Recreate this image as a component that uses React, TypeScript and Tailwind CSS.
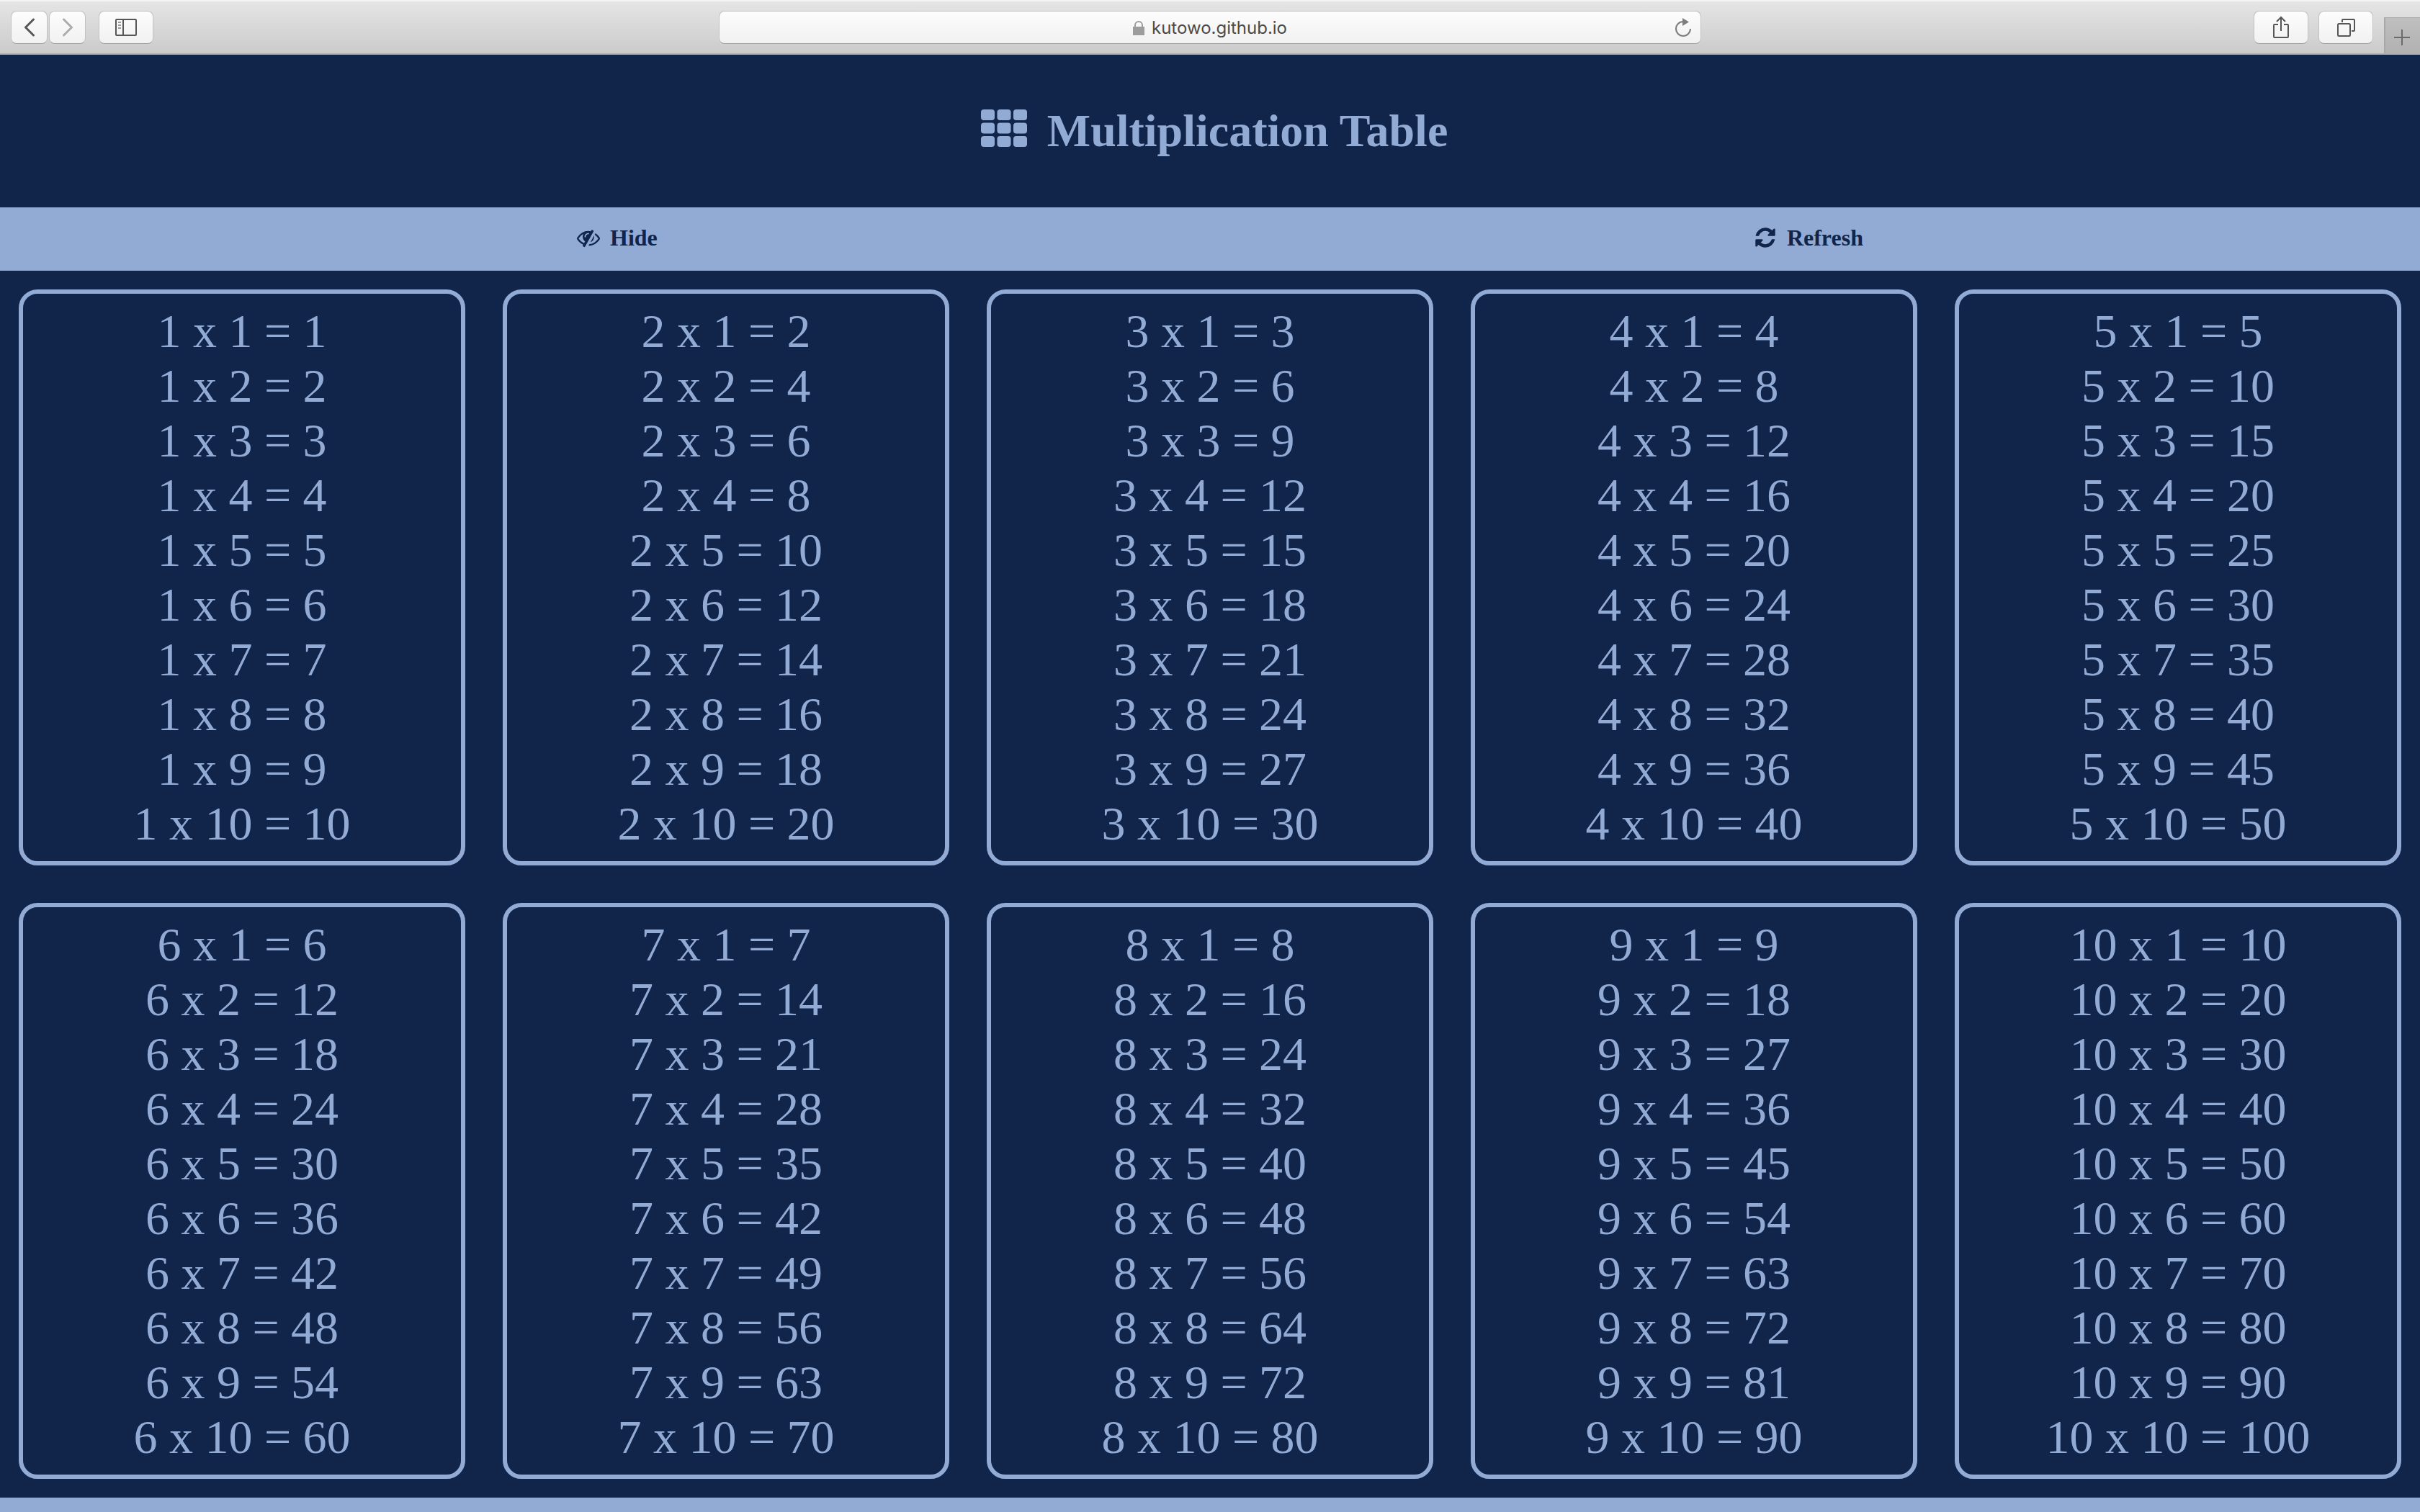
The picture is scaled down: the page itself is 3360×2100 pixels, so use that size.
const numbers = [1, 2, 3, 4, 5, 6, 7, 8, 9, 10];

const toolbarButton =
  "flex h-[46px] items-center justify-center rounded-lg border border-[#c2c2c2] border-b-[#a0a0a0] bg-linear-to-b from-[#fdfdfd] to-[#f1f1f1]";

function BrowserBar() {
  return (
    <div className="grid h-[76px] grid-cols-[1fr_minmax(0,1364px)_1fr] border-t-2 border-b-2 border-t-[#f4f4f4] border-b-[#b1b1b1] bg-linear-to-b from-[#e5e5e5] to-[#cbcbcb] font-['Inter',sans-serif]">
      <div className="flex items-start pt-[13px] pl-[15px]">
        <button type="button" aria-label="Back" className={`${toolbarButton} w-[51px]`}>
          <svg width="16" height="26" viewBox="0 0 16 26" fill="none" stroke="#565656" strokeWidth="3" strokeLinecap="round" strokeLinejoin="round">
            <path d="M13.500 2 2.500 13l11 11" />
          </svg>
        </button>
        <button type="button" aria-label="Forward" className={`${toolbarButton} ml-0.5 w-[51px]`}>
          <svg width="16" height="26" viewBox="0 0 16 26" fill="none" stroke="#acacac" strokeWidth="3" strokeLinecap="round" strokeLinejoin="round">
            <path d="M2.500 2l11 11-11 11" />
          </svg>
        </button>
        <button type="button" aria-label="Show sidebar" className={`${toolbarButton} ml-[18px] w-[76px]`}>
          <svg width="30" height="24" viewBox="0 0 30 24" fill="none" stroke="#565656" strokeWidth="2">
            <rect x="1" y="1" width="28" height="22" rx="1" />
            <path d="M11 1v22" />
            <path d="M4 5h4M4 9h4M4 13h4" stroke="#9a9a9a" />
          </svg>
        </button>
      </div>

      <div className="mt-[13px] grid h-[46px] grid-cols-[1fr_auto_1fr] items-center rounded-lg border border-[#c2c2c2] border-b-[#a0a0a0] bg-linear-to-b from-[#fdfdfd] to-[#f1f1f1]">
        <span />
        <div className="flex items-center gap-2.5 pt-0.5">
          <svg width="16" height="20" viewBox="0 0 16 20">
            <rect x="0" y="8" width="16" height="12" fill="#9c9c9c" />
            <path d="M3 9V6a5 5 0 0 1 10 0v3" fill="none" stroke="#9c9c9c" strokeWidth="2" />
          </svg>
          <input
            aria-label="Address"
            defaultValue="kutowo.github.io"
            className="[field-sizing:content] bg-transparent text-[24px] leading-8 text-[#4a4a4a] outline-none"
          />
        </div>
        <button type="button" aria-label="Reload" className="mr-3 justify-self-end">
          <svg width="24" height="28" viewBox="0 0 24 28">
            <path d="M12 6a10 10 0 1 0 10 10" fill="none" stroke="#7e7e7e" strokeWidth="2" />
            <path d="M11 1l9 5.500-9 5.500z" fill="#7e7e7e" />
          </svg>
        </button>
      </div>

      <div className="flex items-start justify-end pt-[13px]">
        <button type="button" aria-label="Share" className={`${toolbarButton} w-[76px]`}>
          <svg width="24" height="32" viewBox="0 0 24 32" fill="none" stroke="#565656" strokeWidth="2">
            <path d="M8 12H3a1 1 0 0 0-1 1v16a1 1 0 0 0 1 1h18a1 1 0 0 0 1-1V13a1 1 0 0 0-1-1h-5" />
            <path d="M12 21V2M6 8l6-6 6 6" />
          </svg>
        </button>
        <button type="button" aria-label="Show all tabs" className={`${toolbarButton} ml-3.5 w-[76px]`}>
          <svg width="26" height="26" viewBox="0 0 26 26" fill="none" stroke="#565656" strokeWidth="2">
            <rect x="2" y="8" width="17" height="17" rx="1.500" />
            <path d="M8 6V3a1 1 0 0 1 1-1h15a1 1 0 0 1 1 1v14a1 1 0 0 1-1 1h-3" />
          </svg>
        </button>
        <button
          type="button"
          aria-label="New tab"
          className="mt-[9px] ml-[15px] flex h-[50px] w-[50px] items-center justify-center border-t border-l-2 border-[#a8a8a8] bg-linear-to-b from-[#bfbfbf] to-[#b1b1b1] pt-1 pr-0.5"
        >
          <svg width="22" height="22" viewBox="0 0 22 22" stroke="#6a6a6a" strokeWidth="2">
            <path d="M11 0v22M0 11h22" />
          </svg>
        </button>
      </div>
    </div>
  );
}

function GridIcon() {
  return (
    <svg width="64" height="52" viewBox="0 0 64 52" fill="currentColor" aria-hidden="true">
      {[0, 18.500, 37].map((y) =>
        [0, 22.500, 45].map((x) => <rect key={`${x}-${y}`} x={x} y={y} width="19" height="15" rx="4" />),
      )}
    </svg>
  );
}

function HideIcon() {
  return (
    <svg width="32" height="32" viewBox="0 0 1792 1792" fill="currentColor" aria-hidden="true">
      <path d="M555 1335l78-141q-87-63-136-159t-49-203q0-121 61-225-229 117-381 353 167 258 427 375zm389-759q0-20-14-34t-34-14q-125 0-214.500 89.500t-89.500 214.500q0 20 14 34t34 14 34-14 14-34q0-86 61-147t147-61q20 0 34-14t14-34zm363-191q0 7-1 9-106 189-316 567t-315 566l-49 89q-10 16-28 16-12 0-134-70-16-10-16-28 0-12 44-87-143-65-263.500-173t-208.500-245q-20-31-20-69t20-69q153-235 380-371t496-136q89 0 180 17l54-97q10-16 28-16 5 0 18 6t31 15.500 33 18.500 31.500 18.500 19.500 11.500q16 10 16 27zm37 447q0 139-79 253.500t-209 164.500l280-502q8 45 8 84zm448 128q0 35-20 69-39 64-109 145-150 172-347.500 267t-419.500 95l74-132q212-18 392.500-137t301.500-307q-115-179-282-294l63-112q95 64 182.500 153t144.500 184q20 34 20 69z" />
    </svg>
  );
}

function RefreshIcon() {
  return (
    <svg width="32" height="32" viewBox="0 0 1792 1792" fill="currentColor" aria-hidden="true">
      <path d="M1639 1056q0 5-1 7-64 268-268 434.500t-478 166.500q-146 0-282.500-55t-243.500-157l-129 129q-19 19-45 19t-45-19-19-45v-448q0-26 19-45t45-19h448q26 0 45 19t19 45-19 45l-137 137q71 66 161 102t187 36q134 0 250-65t186-179q11-17 53-117 8-23 30-23h192q13 0 22.500 9.500t9.500 22.500zm25-800v448q0 26-19 45t-45 19h-448q-26 0-45-19t-19-45 19-45l138-138q-148-137-349-137-134 0-250 65t-186 179q-11 17-53 117-8 23-30 23h-199q-13 0-22.500-9.500t-9.500-22.500v-7q65-268 270-434.500t480-166.500q146 0 284 55.500t245 156.500l130-129q19-19 45-19t45 19 19 45z" />
    </svg>
  );
}

export default function App() {
  return (
    <div className="flex min-h-screen flex-col bg-[#11244a] font-['Liberation_Serif',serif] text-[#92abd4]">
      <BrowserBar />

      <header className="flex h-[212px] items-center justify-center gap-7 pb-2 pl-3">
        <GridIcon />
        <h1 className="pt-2 text-[64px] leading-[76px] font-bold">Multiplication Table</h1>
      </header>

      <nav className="flex h-[88px] items-center justify-around bg-[#92abd4] pr-3 pb-1 pl-10 text-[32px] leading-9 font-bold text-[#11244a]">
        <button type="button" className="flex items-center gap-3.5">
          <HideIcon />
          Hide
        </button>
        <button type="button" className="flex items-center gap-3.5">
          <RefreshIcon />
          Refresh
        </button>
      </nav>

      <main className="grid grid-cols-5 gap-[52px] p-[26px]">
        {numbers.map((a) => (
          <ul
            key={a}
            className="rounded-[26px] border-6 border-[#92abd4] py-3.5 text-center text-[66px] leading-[76px]"
          >
            {numbers.map((b) => (
              <li key={b}>{`${a} x ${b} = ${a * b}`}</li>
            ))}
          </ul>
        ))}
      </main>

      <footer className="min-h-5 flex-1 bg-[#92abd4]" />
    </div>
  );
}
